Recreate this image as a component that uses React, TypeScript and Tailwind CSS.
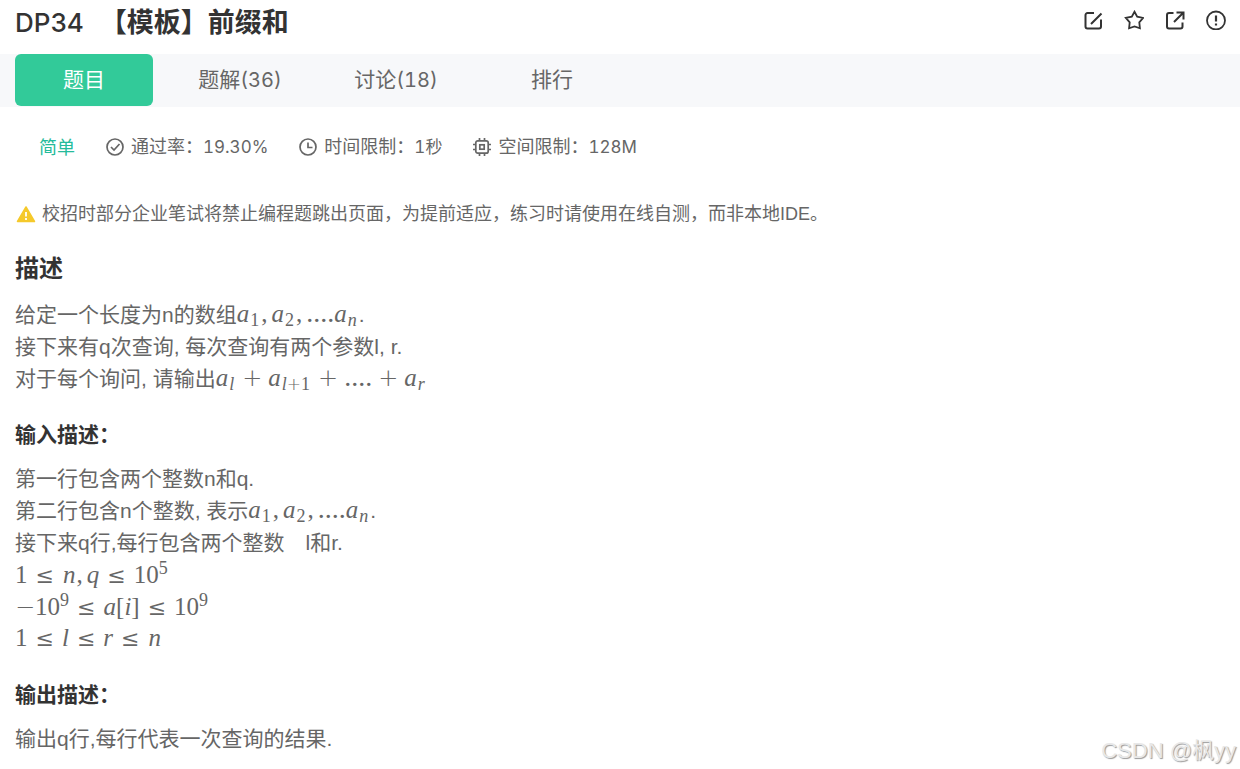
import type { ReactNode } from "react";

function EditIcon() {
  return (
    <svg viewBox="0 0 20 20" className="size-5" fill="none" stroke="currentColor" strokeWidth="2">
      <path d="M11 3H4.500A2 2 0 0 0 2.500 5v11.500a2 2 0 0 0 2 2H16a2 2 0 0 0 2-2V9.500M8 14 18.500 3.500" />
    </svg>
  );
}

function StarIcon() {
  return (
    <svg viewBox="0 0 20 20" className="size-5" fill="none" stroke="currentColor" strokeWidth="1.8">
      <path d="m10.500 1.700 2.700 4.900 6 1.300-3.900 4.400.6 6-5.400-1.800-5.400 1.800.6-6L1.800 7.900l6-1.300z" />
    </svg>
  );
}

function ShareIcon() {
  return (
    <svg viewBox="0 0 20 20" className="size-5" fill="none" stroke="currentColor" strokeWidth="2">
      <path d="M8.500 3H4A2 2 0 0 0 2 5v11.500a2 2 0 0 0 2 2h11.500a2 2 0 0 0 2-2V12.500M9 12l9-9M11.500 2.500h7V9.500" />
    </svg>
  );
}

function ReportIcon() {
  return (
    <svg viewBox="0 0 20 20" className="size-5" fill="none" stroke="currentColor" strokeWidth="1.8">
      <circle cx="10" cy="10.500" r="9" />
      <path d="M10 5.500v6M10 13.500v2" strokeWidth="2.200" />
    </svg>
  );
}

function PassIcon() {
  return (
    <svg viewBox="0 0 18 18" className="size-[18px]" fill="none" stroke="currentColor" strokeWidth="1.700">
      <circle cx="9" cy="9" r="8" />
      <path d="m5 9 3 3 5.500-6" />
    </svg>
  );
}

function ClockIcon() {
  return (
    <svg viewBox="0 0 18 18" className="size-[18px]" fill="none" stroke="currentColor" strokeWidth="1.700">
      <circle cx="9" cy="9" r="8" />
      <path d="M9 4.500V9.500h4.500" />
    </svg>
  );
}

function ChipIcon() {
  return (
    <svg viewBox="0 0 18 18" className="size-[18px]" fill="none" stroke="currentColor" strokeWidth="1.700">
      <rect x="2.800" y="2.800" width="12.400" height="12.400" rx="2" />
      <rect x="6.800" y="6.800" width="4.400" height="4.400" />
      <path d="M6.500 0v3M11.500 0v3M6.500 15v3M11.500 15v3M0 6.500h3M0 11.500h3M15 6.500h3M15 11.500h3" />
    </svg>
  );
}

function WarningIcon() {
  return (
    <svg viewBox="0 0 20 18" className="h-[18px] w-5">
      <path d="M10 2 18.500 16.500h-17z" fill="#f5c92b" stroke="#f5c92b" strokeWidth="1.500" strokeLinejoin="round" />
      <path d="M10 7v4.500M10 13v2" stroke="#fff" strokeWidth="1.800" />
    </svg>
  );
}

function M({ children }: { children: ReactNode }) {
  return (
    <span className="font-['Liberation_Serif',serif] text-[25px] leading-none whitespace-nowrap">{children}</span>
  );
}

function Sub({ children }: { children: ReactNode }) {
  return <span className="mr-0.5 ml-px align-[-4px] text-[18px] leading-none">{children}</span>;
}

function Sup({ children }: { children: ReactNode }) {
  return <span className="align-[9px] text-[18px] leading-none">{children}</span>;
}

function Rel() {
  return <span className="mx-2 font-['DejaVu_Serif',serif] text-[22px] leading-none">≤</span>;
}

function Plus() {
  return <span className="mx-1.5 font-['DejaVu_Sans',sans-serif] text-[24px] leading-none font-extralight">+</span>;
}

function Comma() {
  return <span className="mr-1">,</span>;
}

function Dots() {
  return <span className="text-[28px] leading-none">....</span>;
}

function N() {
  return <i className="mx-px">n</i>;
}

function Sequence() {
  return (
    <M>
      <i>a</i>
      <Sub>1</Sub>
      <Comma />
      <i>a</i>
      <Sub>2</Sub>
      <Comma />
      <Dots />
      <i>a</i>
      <Sub>
        <i>n</i>
      </Sub>
    </M>
  );
}

function Meta({ icon, label, value }: { icon: ReactNode; label: string; value: string }) {
  return (
    <div className="flex items-center gap-[7px]">
      {icon}
      <span>
        {label}：<span className="text-[17px]">{value}</span>
      </span>
    </div>
  );
}

const actions = [
  { label: "编辑", icon: <EditIcon /> },
  { label: "收藏", icon: <StarIcon /> },
  { label: "分享", icon: <ShareIcon /> },
  { label: "反馈", icon: <ReportIcon /> },
];

const tabs = [
  { label: "题目", count: "" },
  { label: "题解", count: "(36)" },
  { label: "讨论", count: "(18)" },
  { label: "排行", count: "" },
];

export default function App() {
  return (
    <div className="relative min-h-screen bg-white font-['Liberation_Sans','Noto_Sans_CJK_SC',sans-serif] text-[#666]">
      <header className="flex h-[54px] items-start justify-between pr-[14px] pl-[15px] text-[#333]">
        <h1 className="flex gap-4 pt-[3px] text-[27px] leading-10">
          <span className="font-['Inter',sans-serif] text-[26px] font-medium">DP34</span>
          <span className="font-bold">【模板】前缀和</span>
        </h1>
        <div className="flex gap-[21px] pt-[10px]">
          {actions.map((a) => (
            <button key={a.label} type="button" aria-label={a.label}>
              {a.icon}
            </button>
          ))}
        </div>
      </header>

      <nav className="flex h-[53px] gap-[18px] bg-[#f7f8fa] pl-[15px] font-['Inter','Noto_Sans_CJK_SC',sans-serif] text-[21px] tabular-nums">
        {tabs.map((t, i) => (
          <button
            key={t.label}
            type="button"
            className={
              i === 0
                ? "h-[52px] w-[138px] rounded-md bg-[#32ca99] text-white"
                : "h-[52px] w-[138px] rounded-md"
            }
          >
            {t.label}
            {t.count && <span className="text-[20px]">{t.count}</span>}
          </button>
        ))}
      </nav>

      <div className="flex h-20 items-center gap-[31px] pl-[39px] font-['Inter','Noto_Sans_CJK_SC',sans-serif] text-[18px] tabular-nums">
        <span className="text-[#25bb9b]">简单</span>
        <Meta icon={<PassIcon />} label="通过率" value="19.30%" />
        <Meta icon={<ClockIcon />} label="时间限制" value="1秒" />
        <Meta icon={<ChipIcon />} label="空间限制" value="128M" />
      </div>

      <main className="px-[15px] pb-3">
        <p className="flex h-[54px] items-center gap-1.5 pl-px text-[18px]">
          <WarningIcon />
          <span>校招时部分企业笔试将禁止编程题跳出页面，为提前适应，练习时请使用在线自测，而非本地IDE。</span>
        </p>

        <h2 className="mt-2.5 text-[24px] leading-9 font-bold text-[#333]">描述</h2>
        <div className="mt-3 text-[21px] leading-8">
          <p className="h-8">
            给定一个长度为n的数组
            <Sequence />.
          </p>
          <p className="h-8">接下来有q次查询, 每次查询有两个参数l, r.</p>
          <p className="h-8">
            对于每个询问, 请输出
            <M>
              <i>a</i>
              <Sub>
                <i>l</i>
              </Sub>
              <Plus />
              <i>a</i>
              <Sub>
                <i>l</i>
                <span className="font-['DejaVu_Sans',sans-serif] text-[17px] leading-none font-extralight">+</span>1
              </Sub>
              <Plus />
              <Dots />
              <Plus />
              <i>a</i>
              <Sub>
                <i>r</i>
              </Sub>
            </M>
          </p>
        </div>

        <h3 className="mt-6 text-[21px] leading-8 font-bold text-[#333]">输入描述：</h3>
        <div className="mt-3 text-[21px] leading-8">
          <p className="h-8">第一行包含两个整数n和q.</p>
          <p className="h-8">
            第二行包含n个整数, 表示
            <Sequence />.
          </p>
          <p className="h-8">接下来q行,每行包含两个整数　l和r.</p>
          <p className="h-8">
            <M>
              1<Rel />
              <N />
              <Comma />
              <i>q</i>
              <Rel />
              10<Sup>5</Sup>
            </M>
          </p>
          <p className="h-8">
            <M>
              <span className="font-['DejaVu_Sans',sans-serif] text-[24px] leading-none font-extralight">−</span>
              10<Sup>9</Sup>
              <Rel />
              <i>a</i>[<i>i</i>]
              <Rel />
              10<Sup>9</Sup>
            </M>
          </p>
          <p className="h-8">
            <M>
              1<Rel />
              <i>l</i>
              <Rel />
              <i>r</i>
              <Rel />
              <N />
            </M>
          </p>
        </div>

        <h3 className="mt-6 text-[21px] leading-8 font-bold text-[#333]">输出描述：</h3>
        <p className="mt-3 text-[21px] leading-8">输出q行,每行代表一次查询的结果.</p>
      </main>

      <div className="absolute right-1 bottom-0 text-[22px] leading-9 text-[#e8e8e8] [text-shadow:1px_1px_1px_#999]">
        CSDN @枫yy
      </div>
    </div>
  );
}
